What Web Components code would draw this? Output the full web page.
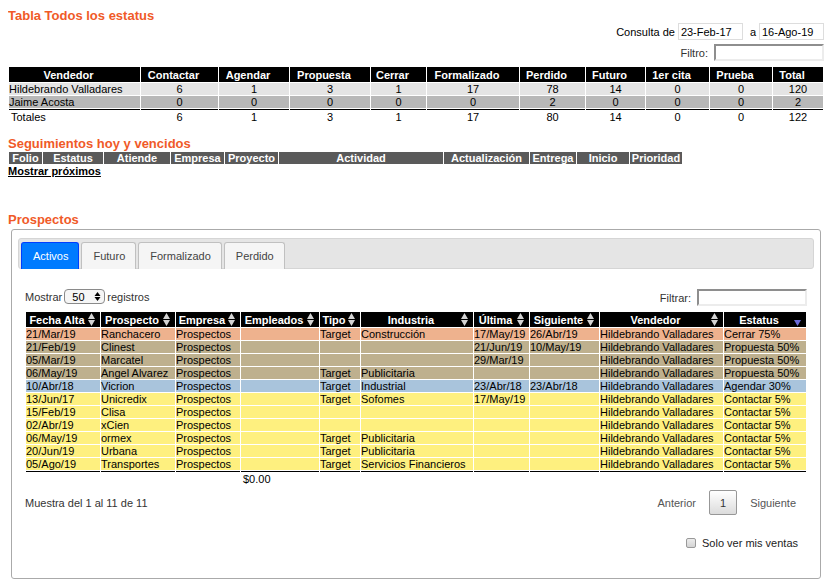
<!DOCTYPE html>
<html lang="es">
<head>
<meta charset="utf-8">
<title>Prospectos</title>
<style>
body { margin: 8px; background: #fff; color: #000; font: 11px/12px "Liberation Sans", Arial, sans-serif; }
</style>
</head>
<body>
<sales-dashboard></sales-dashboard>

<template id="dashboard-template">
  <style>
    :host { display: block; }
    .followups { margin-top: 12px; }
    .link { display: table; color: #000; font-weight: bold; line-height: 13px; }
    .prospects { margin-top: 34px; }
    prospects-panel { margin: 2px 3px 0; }
  </style>
  <section>
    <section-title>Tabla Todos los estatus</section-title>
    <date-query></date-query>
    <status-table></status-table>
  </section>
  <section class="followups">
    <section-title>Seguimientos hoy y vencidos</section-title>
    <followup-table></followup-table>
    <a class="link" href="#proximos">Mostrar próximos</a>
  </section>
  <section class="prospects">
    <section-title>Prospectos</section-title>
    <prospects-panel></prospects-panel>
  </section>
</template>

<template id="title-template">
  <style>
    :host { display: block; }
    h2 { margin: 0; color: #f05a28; font-size: 13px; line-height: 15px; font-weight: bold; }
  </style>
  <h2><slot></slot></h2>
</template>

<template id="query-template">
  <style>
    :host { display: flex; flex-direction: column; align-items: flex-end; gap: 4px; margin-bottom: 5px; }
    form { display: flex; align-items: center; gap: 3px; }
    input { box-sizing: border-box; width: 65px; height: 17px; margin: 0; padding: 0 2px; border: 1px solid #ddd; background: #fff; color: #000; font: inherit; }
    .to { margin-left: 4px; }
  </style>
  <form>
    <label for="from">Consulta de</label>
    <input id="from" type="text" value="23-Feb-17">
    <label for="to" class="to">a</label>
    <input id="to" type="text" value="16-Ago-19">
  </form>
  <filter-box>Filtro:</filter-box>
</template>

<template id="filter-template">
  <style>
    :host { display: block; color: #333; }
    label { display: flex; align-items: center; gap: 6px; }
    input { box-sizing: border-box; width: 110px; height: 17px; margin: 0; padding: 0 2px; border: 2px solid; border-color: #8e8e8e #ececec #ececec #8e8e8e; border-radius: 0; background: #fff; font: inherit; }
  </style>
  <label><span><slot></slot></span><input type="text"></label>
</template>

<template id="panel-template">
  <style>
    :host { display: block; border: 1px solid #aaa; border-radius: 3px; padding: 8px 6px 29px; color: #333; }
    .body { padding: 20px 7px 0; }
    .tools { display: flex; justify-content: space-between; align-items: flex-start; margin-bottom: 5px; }
    .length { display: flex; align-items: center; gap: 2px; }
    .picker { position: relative; display: flex; }
    select { appearance: none; box-sizing: border-box; width: 41px; height: 15px; margin: 0; padding: 0 7px; border: 1px solid #8a8a8a; border-radius: 4px; background: #f6f6f6; color: #000; font: inherit; }
    .picker svg { position: absolute; right: 4px; top: 3px; pointer-events: none; }
    .footer { display: flex; justify-content: space-between; align-items: center; margin-top: 4px; }
    .mine { display: flex; justify-content: flex-end; align-items: center; gap: 6px; margin: 22px 9px 0 0; color: #222; }
    .mine input { appearance: none; box-sizing: border-box; width: 10px; height: 10px; margin: 0; border: 1px solid #999; border-radius: 2px; background: linear-gradient(#ececec, #d4d4d4); }
  </style>
  <tab-bar></tab-bar>
  <div class="body">
    <div class="tools">
      <div class="length">
        <label for="length">Mostrar</label>
        <span class="picker">
          <select id="length"><option>10</option><option>25</option><option selected>50</option><option>100</option></select>
          <svg width="7" height="9" viewBox="0 0 7 9" aria-hidden="true"><path d="M3.5 0 6.5 4h-6zM3.5 9 .5 5h6z" fill="#000"/></svg>
        </span>
        <span>registros</span>
      </div>
      <filter-box>Filtrar:</filter-box>
    </div>
    <prospects-table></prospects-table>
    <div class="footer">
      <span>Muestra del 1 al 11 de 11</span>
      <page-nav></page-nav>
    </div>
    <label class="mine"><input type="checkbox">Solo ver mis ventas</label>
  </div>
</template>

<template id="tabs-template">
  <style>
    :host { display: flex; gap: 2px; padding: 3px 2px 0; border: 1px solid #d5d5d5; border-radius: 3px; background: #e5e5e5; }
    button { height: 27px; margin: 0 0 -1px; padding: 0 10px 0 11px; border: 1px solid #c0c0c0; border-bottom: 0; border-radius: 3px 3px 0 0; background: #f5f5f5; color: #444; font: inherit; }
    button[aria-selected="true"] { border-color: #003eff; background: #007bff; color: #fff; }
  </style>
  <button type="button" role="tab" aria-selected="true">Activos</button>
  <button type="button" role="tab" aria-selected="false">Futuro</button>
  <button type="button" role="tab" aria-selected="false">Formalizado</button>
  <button type="button" role="tab" aria-selected="false">Perdido</button>
</template>

<template id="pages-template">
  <style>
    :host { display: flex; gap: 2px; }
    button { height: 25px; margin: 0; padding: 0 10px; border: 1px solid transparent; border-radius: 2px; background: none; color: #555; font: inherit; }
    .current { border-color: #979797; background: linear-gradient(#fff, #dcdcdc); color: #333; }
  </style>
  <button type="button">Anterior</button>
  <button type="button" class="current">1</button>
  <button type="button">Siguiente</button>
</template>

<script>
const stamp = (el, id) =>
  el.attachShadow({ mode: 'open' }).append(document.getElementById(id).content.cloneNode(true));

const TABLE_STYLE = `
  :host { display: block; }
  table { width: 100%; table-layout: fixed; border-collapse: separate; border-spacing: 1px; color: #000; }
  th, td { padding: 0; white-space: nowrap; text-align: left; }
  thead th { height: 15px; background: #000; color: #fff; font-weight: bold; text-align: center; }
  tfoot td { border-top: 1px solid #000; padding-top: 1px; }
`;
const cols = widths => `<colgroup>${widths.map(w => `<col style="width:${w}px">`).join('')}</colgroup>`;
const cells = (row, tag = 'td') => row.map(v => `<${tag}>${v}</${tag}>`).join('');

class StatusTable extends HTMLElement {
  constructor() {
    super();
    const heads = ['Vendedor', 'Contactar', 'Agendar', 'Propuesta', 'Cerrar', 'Formalizado', 'Perdido', 'Futuro', '1er cita', 'Prueba', 'Total'];
    const rows = [
      ['Hildebrando Valladares', 6, 1, 3, 1, 17, 78, 14, 0, 0, 120],
      ['Jaime Acosta', 0, 0, 0, 0, 0, 2, 0, 0, 0, 2]
    ];
    const totals = ['Totales', 6, 1, 3, 1, 17, 80, 14, 0, 0, 122];
    this.attachShadow({ mode: 'open' }).innerHTML = `<style>${TABLE_STYLE}
      thead th { padding-right: 12px; }
      td:not(:first-child) { text-align: center; }
      tbody td { background: #b8b8b8; }
      tbody tr:nth-child(odd) td { background: #e4e4e4; }
      tfoot td:first-child { padding-left: 2px; }
      </style><table>${cols([131, 77, 70, 80, 55, 92, 65, 59, 63, 62, 50])}
      <thead><tr>${cells(heads, 'th')}</tr></thead>
      <tbody>${rows.map(r => `<tr>${cells(r)}</tr>`).join('')}</tbody>
      <tfoot><tr>${cells(totals)}</tr></tfoot></table>`;
  }
}

class FollowupTable extends HTMLElement {
  constructor() {
    super();
    const heads = ['Folio', 'Estatus', 'Atiende', 'Empresa', 'Proyecto', 'Actividad', 'Actualización', 'Entrega', 'Inicio', 'Prioridad'];
    this.attachShadow({ mode: 'open' }).innerHTML = `<style>${TABLE_STYLE}
      table { width: auto; table-layout: auto; }
      thead th { height: 12px; background: #5a5a5a; }
      </style><table>${cols([33, 60, 66, 53, 53, 164, 85, 46, 52, 52])}
      <thead><tr>${cells(heads, 'th')}</tr></thead></table>`;
  }
}

class ProspectsTable extends HTMLElement {
  constructor() {
    super();
    const heads = ['Fecha Alta', 'Prospecto', 'Empresa', 'Empleados', 'Tipo', 'Industria', 'Última', 'Siguiente', 'Vendedor', 'Estatus'];
    const hv = 'Hildebrando Valladares', pr = 'Prospectos';
    const rows = [
      ['close', '21/Mar/19', 'Ranchacero', pr, '', 'Target', 'Construcción', '17/May/19', '26/Abr/19', hv, 'Cerrar 75%'],
      ['offer', '21/Feb/19', 'Clinest', pr, '', '', '', '21/Jun/19', '10/May/19', hv, 'Propuesta 50%'],
      ['offer', '05/Mar/19', 'Marcatel', pr, '', '', '', '29/Mar/19', '', hv, 'Propuesta 50%'],
      ['offer', '06/May/19', 'Angel Alvarez', pr, '', 'Target', 'Publicitaria', '', '', hv, 'Propuesta 50%'],
      ['meet', '10/Abr/18', 'Vicrion', pr, '', 'Target', 'Industrial', '23/Abr/18', '23/Abr/18', hv, 'Agendar 30%'],
      ['contact', '13/Jun/17', 'Unicredix', pr, '', 'Target', 'Sofomes', '17/May/19', '', hv, 'Contactar 5%'],
      ['contact', '15/Feb/19', 'Clisa', pr, '', '', '', '', '', hv, 'Contactar 5%'],
      ['contact', '02/Abr/19', 'xCien', pr, '', '', '', '', '', hv, 'Contactar 5%'],
      ['contact', '06/May/19', 'ormex', pr, '', 'Target', 'Publicitaria', '', '', hv, 'Contactar 5%'],
      ['contact', '20/Jun/19', 'Urbana', pr, '', 'Target', 'Publicitaria', '', '', hv, 'Contactar 5%'],
      ['contact', '05/Ago/19', 'Transportes', pr, '', 'Target', 'Servicios Financieros', '', '', hv, 'Contactar 5%']
    ];
    const both = '<path d="M3.5 0 7 6H0zM3.5 13 0 7h7z" fill="#d3d3d3"/>';
    const down = '<path d="M3.5 13 0 7h7z" fill="#6a6ad8"/>';
    const head = (h, i) => `<th><button type="button"><span>${h}</span><svg width="7" height="13" viewBox="0 0 7 13" aria-hidden="true">${i === 9 ? down : both}</svg></button></th>`;
    this.attachShadow({ mode: 'open' }).innerHTML = `<style>${TABLE_STYLE}
      button { display: flex; align-items: center; width: 100%; height: 15px; margin: 0; padding: 0 5px 0 0; border: 0; background: none; color: inherit; font: inherit; }
      button span { flex: 1; text-align: center; }
      button svg { flex: none; }
      tbody td { height: 12px; }
      .close td { background: #eeb28e; }
      .offer td { background: #beb08e; }
      .meet td { background: #a9c4dc; }
      .contact td { background: #fef07f; }
      tfoot td { height: 12px; padding-left: 2px; }
      </style><table>${cols([74, 74, 64, 78, 40, 112, 55, 69, 123, 82])}
      <thead><tr>${heads.map(head).join('')}</tr></thead>
      <tbody>${rows.map(([kind, ...r]) => `<tr class="${kind}">${cells(r)}</tr>`).join('')}</tbody>
      <tfoot><tr>${cells(['', '', '', '$0.00', '', '', '', '', '', ''])}</tr></tfoot></table>`;
  }
}

const fromTemplate = id => class extends HTMLElement {
  constructor() { super(); stamp(this, id); }
};

customElements.define('section-title', fromTemplate('title-template'));
customElements.define('filter-box', fromTemplate('filter-template'));
customElements.define('date-query', fromTemplate('query-template'));
customElements.define('tab-bar', fromTemplate('tabs-template'));
customElements.define('page-nav', fromTemplate('pages-template'));
customElements.define('status-table', StatusTable);
customElements.define('followup-table', FollowupTable);
customElements.define('prospects-table', ProspectsTable);
customElements.define('prospects-panel', fromTemplate('panel-template'));
customElements.define('sales-dashboard', fromTemplate('dashboard-template'));
</script>
</body>
</html>
